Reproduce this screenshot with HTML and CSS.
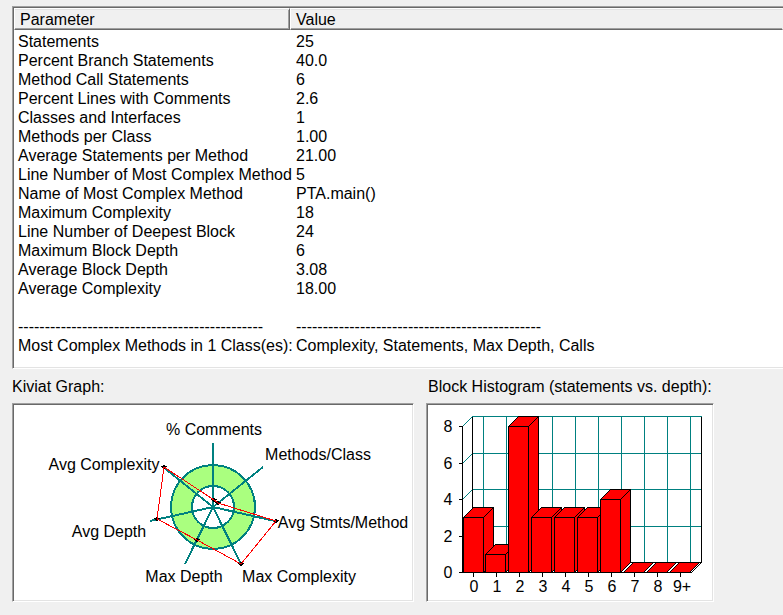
FILE: index.html
```
<!doctype html>
<html lang="en">
<head>
    <title>Metrics Details</title>

    <meta charset="utf-8"/>
    <meta name="viewport" content="width=device-width, initial-scale=1"/>
    <link rel="stylesheet" href="styles.css">
</head>
<body>
<main class="details">
    <div class="sunken list">
        <table class="metrics">
            <thead>
                <tr><th class="param" scope="col">Parameter</th><th scope="col">Value</th></tr>
            </thead>
            <tbody>
                <tr><td>Statements</td><td>25</td></tr>
                <tr><td>Percent Branch Statements</td><td>40.0</td></tr>
                <tr><td>Method Call Statements</td><td>6</td></tr>
                <tr><td>Percent Lines with Comments</td><td>2.6</td></tr>
                <tr><td>Classes and Interfaces</td><td>1</td></tr>
                <tr><td>Methods per Class</td><td>1.00</td></tr>
                <tr><td>Average Statements per Method</td><td>21.00</td></tr>
                <tr><td>Line Number of Most Complex Method</td><td>5</td></tr>
                <tr><td>Name of Most Complex Method</td><td>PTA.main()</td></tr>
                <tr><td>Maximum Complexity</td><td>18</td></tr>
                <tr><td>Line Number of Deepest Block</td><td>24</td></tr>
                <tr><td>Maximum Block Depth</td><td>6</td></tr>
                <tr><td>Average Block Depth</td><td>3.08</td></tr>
                <tr><td>Average Complexity</td><td>18.00</td></tr>
                <tr><td>&nbsp;</td><td></td></tr>
                <tr><td>----------------------------------------------</td><td>----------------------------------------------</td></tr>
                <tr><td>Most Complex Methods in 1 Class(es):</td><td>Complexity, Statements, Max Depth, Calls</td></tr>
            </tbody>
        </table>
    </div>

    <div class="charts">
        <section>
            <h2 class="caption">Kiviat Graph:</h2>
            <div class="sunken">
                <svg class="chart" width="398" height="195" viewBox="0 0 398 195" role="img" aria-label="Kiviat graph">
                    <defs>
                        <path id="mark" d="M-3 -1H3V0H-3ZM-2 0H2V1H-2ZM-1 -2H1V2H-1Z"/>
                    </defs>
                    <circle class="band" cx="199" cy="102" r="31.5"/>
                    <g class="teal" shape-rendering="crispEdges">
                        <circle cx="199" cy="102" r="42"/>
                        <circle cx="199" cy="102" r="21"/>
                        <path d="M199 102V38M199 102L249 62M199 102L261 116M199 102L227 159M199 102L171 159M199 102L136 116M199 102L149 62"/>
                    </g>
                    <g shape-rendering="crispEdges">
                        <use href="#mark" x="200" y="95"/>
                        <use href="#mark" x="204" y="98"/>
                        <use href="#mark" x="262" y="116"/>
                        <use href="#mark" x="227" y="159"/>
                        <use href="#mark" x="183" y="135"/>
                        <use href="#mark" x="143" y="114"/>
                        <use href="#mark" x="150" y="62"/>
                    </g>
                    <path class="plot" shape-rendering="crispEdges" d="M200 95L204 98L262 116L227 159L183 135L143 114L150 62Z"/>
                    <g class="middle">
                        <text x="200" y="30">% Comments</text>
                        <text x="304" y="55">Methods/Class</text>
                        <text x="329" y="123">Avg Stmts/Method</text>
                        <text x="285" y="177">Max Complexity</text>
                        <text x="170" y="177">Max Depth</text>
                        <text x="95" y="132">Avg Depth</text>
                        <text x="90" y="65">Avg Complexity</text>
                    </g>
                </svg>
            </div>
        </section>

        <section>
            <h2 class="caption histogram">Block Histogram (statements vs. depth):</h2>
            <div class="sunken">
                <svg class="chart" width="284" height="195" viewBox="0 0 284 195" role="img" aria-label="Block histogram">
                    <g transform="translate(.5 .5)" shape-rendering="crispEdges">
                        <!-- back wall -->
                        <path class="grid" d="M44 11H273M44 48H273M44 84H273M44 121H273M55 11V157M78 11V157M101 11V157M124 11V157M147 11V157M170 11V157M193 11V157M216 11V157M239 11V157M262 11V157M34 21L44 11M34 58L44 48M34 94L44 84M34 131L44 121"/>
                        <path class="axis" d="M44 11V157H273V11M263 167L273 157M34 21V167H263"/>
                        <path class="axis" d="M30 21H34M30 58H34M30 94H34M30 131H34M30 167H34"/>
                        <path class="axis" d="M45 167V171M68 167V171M91 167V171M114 167V171M137 167V171M160 167V171M183 167V171M206 167V171M229 167V171M252 167V171"/>
                        <!-- bars: outline, then the top and front edges -->
                        <g class="bar">
                            <path d="M35 167V112L45 102H65V157L55 167ZM65 102L55 112H35M55 112V167"/>
                            <path d="M57 167V149L67 139H87V157L77 167ZM87 139L77 149H57M77 149V167"/>
                            <path d="M80 167V21L90 11H110V157L100 167ZM110 11L100 21H80M100 21V167"/>
                            <path d="M103 167V112L113 102H133V157L123 167ZM133 102L123 112H103M123 112V167"/>
                            <path d="M126 167V112L136 102H156V157L146 167ZM156 102L146 112H126M146 112V167"/>
                            <path d="M149 167V112L159 102H179V157L169 167ZM179 102L169 112H149M169 112V167"/>
                            <path d="M172 167V94L182 84H202V157L192 167ZM202 84L192 94H172M192 94V167"/>
                            <path d="M195 167L205 157H225L215 167Z"/>
                            <path d="M218 167L228 157H248L238 167Z"/>
                            <path d="M241 167L251 157H271L261 167Z"/>
                        </g>
                    </g>
                    <g class="middle">
                        <text x="20" y="27">8</text>
                        <text x="20" y="64">6</text>
                        <text x="20" y="100">4</text>
                        <text x="20" y="137">2</text>
                        <text x="20" y="173">0</text>
                        <text x="46" y="187">0</text>
                        <text x="69" y="187">1</text>
                        <text x="92" y="187">2</text>
                        <text x="115" y="187">3</text>
                        <text x="138" y="187">4</text>
                        <text x="161" y="187">5</text>
                        <text x="184" y="187">6</text>
                        <text x="207" y="187">7</text>
                        <text x="230" y="187">8</text>
                        <text x="254" y="187">9+</text>
                    </g>
                </svg>
            </div>
        </section>
    </div>
</main>
</body>
</html>
```
FILE: styles.css
```
body {
margin: 0;
background-color: #f0f0f0;
color: #000;
font: 16px/19px "Liberation Sans", Arial, sans-serif;
}
.details {
padding: 6px 0 12px 12px;
}
.sunken {
padding: 1px;
background-color: #fff;
border: 1px solid;
border-color: #a0a0a0 #fff #fff #a0a0a0;
box-shadow: inset 1px 1px #696969, inset -1px -1px #e3e3e3;
}
/* the list runs off the right side of the window */
.list {
padding-right: 0;
padding-bottom: 13px;
border-right: 0;
box-shadow: inset 1px 1px #696969, inset 0 -1px #e3e3e3;
}
.metrics {
width: 100%;
table-layout: fixed;
border-collapse: separate;
border-spacing: 0;
white-space: nowrap;
}
.metrics th {
box-sizing: border-box;
height: 22px;
padding: 1px 5px 0;
font-weight: normal;
text-align: left;
background-color: #f0f0f0;
border: 1px solid;
border-color: #fff transparent #696969 #fff;
box-shadow: inset 0 1px #e3e3e3, inset 0 -1px #a0a0a0;
}
.metrics .param {
width: 276px;
border-right-color: #696969;
box-shadow: inset 0 1px #e3e3e3, inset -1px -1px #a0a0a0;
}
.metrics td {
height: 19px;
padding: 0 0 0 4px;
}
.metrics td + td {
padding-left: 6px;
}
.metrics tbody tr:first-child td {
padding-top: 2px;
}
.charts {
display: flex;
align-items: flex-start;
gap: 12px;
padding-top: 8px;
}
.caption {
margin: 0 0 7px;
font-size: 16px;
font-weight: normal;
}
.histogram {
padding-left: 2px;
}
.chart {
display: block;
font-size: 16px;
}
.middle {
text-anchor: middle;
}
.band {
fill: none;
stroke: #aaff7f;
stroke-width: 21px;
}
.teal {
fill: none;
stroke: #008080;
stroke-width: 2px;
}
.grid {
fill: none;
stroke: #008080;
}
.axis {
fill: none;
stroke: #000;
}
.plot {
fill: none;
stroke: #f00;
}
.bar {
fill: #f00;
stroke: #000;
}
```
